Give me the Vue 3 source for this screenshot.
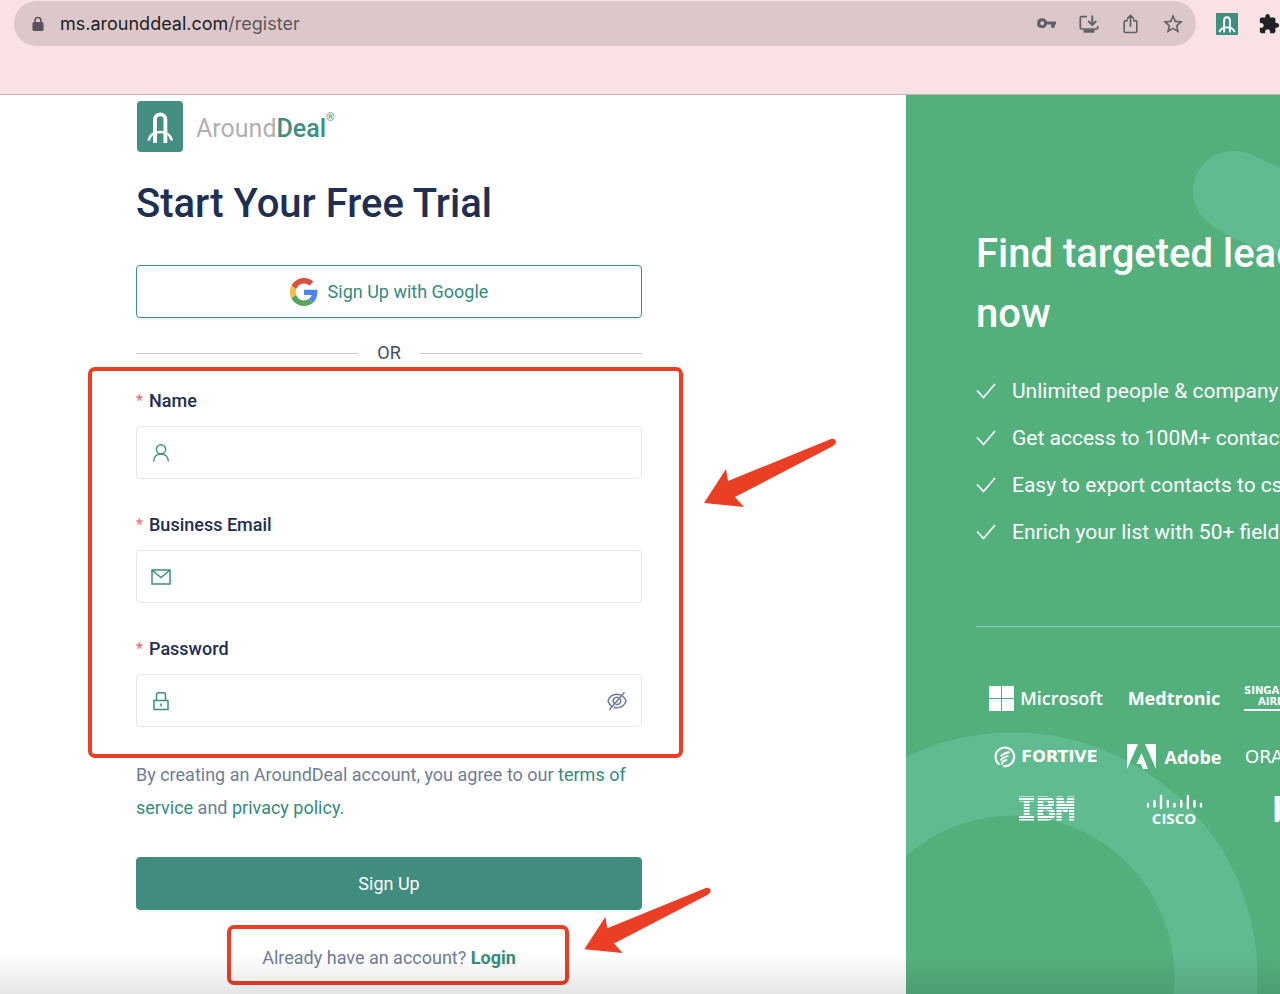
<script setup>
import { ref } from 'vue'

const name = ref('')
const email = ref('')
const password = ref('')
const showPassword = ref(false)

const benefits = [
  'Unlimited people & company',
  'Get access to 100M+ contacts',
  'Easy to export contacts to csv',
  'Enrich your list with 50+ fields',
]

const arrowPath = 'M0 65 22 31 24 43 127 1Q131 0 132 4 132 6 129 8L31 59 40 69Z'
</script>

<template>
  <div class="page">
    <header class="toolbar">
      <div class="address">
        <svg class="padlock" viewBox="0 0 12 16" aria-hidden="true">
          <path d="M3 7V4.500a3 3 0 0 1 6 0V7" fill="none" stroke="#55555a" stroke-width="1.600" />
          <rect x="0.500" y="6" width="11" height="9" rx="1.500" fill="#55555a" />
        </svg>
        <div class="url">ms.arounddeal.com<span>/register</span></div>
        <div class="actions">
          <button type="button" aria-label="Saved passwords">
            <svg viewBox="0 0 22 22">
              <path fill="currentColor" fill-rule="evenodd" d="M6.200 5.200a5 5 0 0 1 4.700 3.400H20v3h-1.200v3.200h-3.600v-3.200h-4.300A5 5 0 1 1 6.200 5.200zm0 3a2 2 0 1 0 0 4 2 2 0 0 0 0-4z" />
            </svg>
          </button>
          <button type="button" aria-label="Install app">
            <svg viewBox="0 0 22 22" fill="none" stroke="currentColor" stroke-width="1.700">
              <path d="M9 3.600H3.500a1.200 1.200 0 0 0-1.200 1.200v10a1.200 1.200 0 0 0 1.200 1.200h15a1.200 1.200 0 0 0 1.200-1.200V13" />
              <path d="M14.300 2.500v9M10.300 8l4 4 4-4" stroke-width="1.900" />
              <path d="M5.500 16.500h11v3.200h-11z" fill="currentColor" stroke="none" />
            </svg>
          </button>
          <button type="button" aria-label="Share">
            <svg viewBox="0 0 22 22" fill="none" stroke="currentColor" stroke-width="1.600">
              <path d="M8 7.600H5.500a1.300 1.300 0 0 0-1.300 1.300v9.300a1.300 1.300 0 0 0 1.300 1.300h10a1.300 1.300 0 0 0 1.300-1.300V8.900a1.300 1.300 0 0 0-1.300-1.300H13M10.500 14V3M7 6l3.500-3.500L14 6" />
            </svg>
          </button>
          <button type="button" aria-label="Bookmark this page">
            <svg viewBox="1 1 22 22">
              <path fill="currentColor" d="m22 9.240-7.190-.62L12 2 9.190 8.630 2 9.240l5.460 4.730L5.820 21 12 17.270 18.180 21l-1.630-7.030L22 9.240zM12 15.400l-3.760 2.270 1-4.280-3.320-2.880 4.380-.38L12 6.100l1.710 4.040 4.380.38-3.320 2.880 1 4.280L12 15.400z" />
            </svg>
          </button>
        </div>
      </div>
      <button type="button" class="ext" aria-label="AroundDeal extension">
        <svg viewBox="0 0 46 46" fill="none" stroke="#fff" stroke-width="4">
          <path fill="#3f8f80" stroke="none" d="M0 0h46v46H0z" />
          <path d="M17 41V15a6 6 0 0 1 12 0v26M7 40c2-6 8-10 16-10s14 4 16 10" />
        </svg>
      </button>
      <button type="button" class="ext" aria-label="Extensions">
        <svg viewBox="0 0 24 24">
          <path fill="#202124" d="M20.500 11H19V7c0-1.100-.9-2-2-2h-4V3.500C13 2.120 11.880 1 10.500 1S8 2.120 8 3.500V5H4c-1.100 0-1.990.9-1.990 2v3.800H3.500c1.490 0 2.700 1.210 2.700 2.700s-1.210 2.700-2.700 2.700H2V20c0 1.100.9 2 2 2h3.800v-1.500c0-1.490 1.210-2.700 2.700-2.700s2.700 1.210 2.700 2.700V22H17c1.100 0 2-.9 2-2v-4h1.500c1.380 0 2.500-1.120 2.500-2.500S21.880 11 20.500 11z" />
        </svg>
      </button>
    </header>

    <div class="content">
      <main class="signup">
        <div class="column">
          <div class="brand">
            <svg class="mark" viewBox="0 0 46 51" fill="none" stroke="#fff" stroke-width="3.800" aria-hidden="true">
              <rect width="46" height="51" rx="4" fill="#448f82" stroke="none" />
              <path d="M18 42V18.500a5.200 5.200 0 0 1 10.400 0V42" />
              <path d="M11.500 39.500c1-5 5.500-8.500 11.700-8.500s10.700 3.500 11.700 8.500" stroke-width="2.600" />
            </svg>
            <div class="wordmark">Around<b>Deal</b><sup>®</sup></div>
          </div>

          <h1>Start Your Free Trial</h1>

          <button type="button" class="google">
            <svg viewBox="0 0 48 48" aria-hidden="true">
              <path fill="#d9503f" d="M24 9.500c3.540 0 6.710 1.220 9.210 3.600l6.850-6.850C35.900 2.380 30.470 0 24 0 14.620 0 6.510 5.380 2.560 13.220l7.980 6.190C12.430 13.720 17.740 9.500 24 9.500z" />
              <path fill="#5086ec" d="M46.980 24.550c0-1.570-.15-3.090-.38-4.550H24v9.020h12.940c-.58 2.960-2.260 5.480-4.780 7.180l7.730 6c4.510-4.180 7.090-10.360 7.090-17.650z" />
              <path fill="#f2bd42" d="M10.530 28.590c-.48-1.450-.76-2.990-.76-4.590s.27-3.140.76-4.590l-7.980-6.190C.92 16.460 0 20.120 0 24c0 3.880.92 7.540 2.560 10.780l7.970-6.190z" />
              <path fill="#58a55c" d="M24 48c6.480 0 11.930-2.130 15.890-5.810l-7.730-6c-2.150 1.450-4.920 2.300-8.160 2.300-6.260 0-11.570-4.220-13.470-9.910l-7.980 6.190C6.510 42.620 14.620 48 24 48z" />
            </svg>
            Sign Up with Google
          </button>

          <div class="or"><span>OR</span></div>

          <form @submit.prevent>
            <div class="fields">
              <div class="field">
                <label for="name"><i>*</i>Name</label>
                <div class="control">
                  <svg viewBox="0 0 20 20" aria-hidden="true">
                    <circle cx="10" cy="6.300" r="4.600" />
                    <path d="M2.700 18.500c0-4.600 3-7.600 7.300-7.600s7.300 3 7.300 7.600" />
                  </svg>
                  <input id="name" v-model="name" type="text" autocomplete="name">
                </div>
              </div>
              <div class="field">
                <label for="email"><i>*</i>Business Email</label>
                <div class="control">
                  <svg viewBox="0 0 20 20" aria-hidden="true">
                    <path d="M1 3h18v14H1zM1.500 3.500 10 10.500l8.500-7" />
                  </svg>
                  <input id="email" v-model="email" type="email" autocomplete="email">
                </div>
              </div>
              <div class="field">
                <label for="password"><i>*</i>Password</label>
                <div class="control">
                  <svg viewBox="0 0 20 20" aria-hidden="true">
                    <path d="M3 9.500h14v9H3zM5.500 9.500V3.700a2 2 0 0 1 2-2h5a2 2 0 0 1 2 2v5.800M10 12.500v3" />
                  </svg>
                  <input id="password" v-model="password" :type="showPassword ? 'text' : 'password'" autocomplete="new-password">
                  <button type="button" class="eye" aria-label="Show password" @click="showPassword = !showPassword">
                    <svg viewBox="0 0 20 20" aria-hidden="true">
                      <path d="M14 4.200C12.800 3.600 11.500 3.200 10 3.200c-4.500 0-7.700 3-9 6.800.8 2.300 2.200 4.200 4 5.400M6.800 16.300c1 .4 2 .5 3.200.5 4.500 0 7.700-3 9-6.800-.7-2-1.900-3.700-3.400-4.900M11.700 6.800a3.600 3.600 0 0 0-4.600 5.400M8.700 13.300a3.600 3.600 0 0 0 4.500-5.100M2.500 18.800 17.500 1.200" />
                    </svg>
                  </button>
                </div>
              </div>
              <div class="frame"></div>
              <svg class="arrow" viewBox="0 0 132 70" aria-hidden="true"><path :d="arrowPath" /></svg>
            </div>

            <p class="terms">
              By creating an AroundDeal account, you agree to our
              <a href="#terms">terms of service</a> and <a href="#privacy">privacy policy.</a>
            </p>

            <button type="submit" class="submit">Sign Up</button>
          </form>

          <p class="login">
            <span>
              Already have an account? <a href="#login">Login</a>
              <i class="frame"></i>
              <svg class="arrow" viewBox="0 0 132 70" aria-hidden="true"><path :d="arrowPath" /></svg>
            </span>
          </p>
        </div>
      </main>

      <aside class="promo">
        <svg class="shapes" width="374" height="1130" aria-hidden="true">
          <circle cx="107" cy="882" r="203" fill="none" stroke="#61bb90" stroke-width="83" />
          <path fill="#61bb90" d="M328 56c9 0 17 2 25 7 9 5 18 9 27 12v88c-12-3-29-9-41-15-10-4-20-9-28-14-15-9-24-22-24-38 0-22 18-40 41-40z" />
        </svg>
        <div class="pitch">
          <h2>Find targeted leads<br>now</h2>
          <ul>
            <li v-for="item in benefits" :key="item">
              <svg viewBox="0 0 20 16" aria-hidden="true"><path d="M1 7.500 7.500 14.500 19 1" /></svg>
              {{ item }}
            </li>
          </ul>
          <hr>
          <div class="logos">
            <div class="logo microsoft">
              <svg viewBox="0 0 25 25" aria-hidden="true"><path fill="#fff" d="M0 0h12v12H0zM13 0h12v12H13zM0 13h12v12H0zM13 13h12v12H13z" /></svg>
              Microsoft
            </div>
            <div class="logo medtronic">Medtronic</div>
            <div class="logo singapore"><span>SINGAPORE</span><span>AIRLINES</span></div>
            <div class="logo fortive">
              <svg viewBox="0 0 22 22" fill="none" stroke="#fff" aria-hidden="true">
                <path d="M5.500 18.500A9.300 9.300 0 1 1 9 20" stroke-width="2.200" />
                <path d="M7 10.500c1.500-3 4-3 8.500-4.500M6.500 14.500c2-4 5-3 8-5M8 18.500c-.5-4 3-3.500 5-5" stroke-width="2" />
              </svg>
              FORTIVE
            </div>
            <div class="logo adobe">
              <svg viewBox="0 0 29 26" aria-hidden="true"><path fill="#fff" d="M0 0h11L0 25zM18 0h11v25zM14.500 9 21 25h-5l-2-5H9.500z" /></svg>
              Adobe
            </div>
            <div class="logo oracle">ORACLE</div>
            <div class="logo ibm">IBM</div>
            <div class="logo cisco">
              <svg viewBox="0 0 56 16" fill="none" stroke="#fff" stroke-width="2.400" stroke-linecap="round" aria-hidden="true">
                <path d="M1.500 10v2.500M8 7v5.500M14.500 2v12M21.300 7v5.500M28 10v2.500M34.700 7v5.500M41.400 2v12M48 7v5.500M54.500 10v2.500" />
              </svg>
              CISCO
            </div>
            <div class="logo last">b</div>
          </div>
        </div>
      </aside>
      <div class="shade"></div>
    </div>
  </div>
</template>

<style>
body {
  margin: 0;
  overflow-x: hidden;
}
</style>

<style scoped>
.page {
  display: flex;
  flex-direction: column;
  min-height: 100vh;
  font-family: Roboto, "Liberation Sans", sans-serif;
  font-size: 18px;
  line-height: 24px;
  color: #1e2f52;
}

button {
  font: inherit;
  cursor: pointer;
}

a {
  color: #358b7b;
  text-decoration: none;
}

.toolbar {
  display: flex;
  align-items: center;
  gap: 20px;
  padding: 1px 0 48px 14px;
  background: #fae1e4;
  border-bottom: 1px solid #c9b1b7;
}

.address {
  flex: 1;
  display: flex;
  align-items: center;
  height: 45px;
  padding: 0 12px 0 18px;
  border-radius: 23px;
  background: #dcc8ca;
}

.padlock {
  width: 12px;
  height: 16px;
}

.url {
  flex: 1;
  margin-left: 16px;
  font-family: Inter, "Liberation Sans", sans-serif;
  color: #202024;
}

.url span {
  color: #5d5659;
}

.actions {
  display: flex;
  gap: 20px;
}

.actions button,
.ext,
.eye {
  display: flex;
  padding: 0;
  border: 0;
  background: none;
  color: #5f6064;
}

.toolbar button svg {
  width: 22px;
  height: 22px;
}

.content {
  position: relative;
  flex: 1;
  display: grid;
  grid-template-columns: minmax(0, 906fr) minmax(0, 374fr);
}

.signup {
  padding: 6px 48px 24px 136px;
}

.column {
  max-width: 506px;
}

.brand {
  display: flex;
  align-items: center;
  gap: 12px;
}

.mark {
  width: 48px;
  height: 51px;
}

.wordmark {
  display: flex;
  align-items: center;
  padding-top: 4px;
  font-size: 25px;
  line-height: 26px;
  color: #b0b0b0;
}

.wordmark b {
  font-weight: 500;
  color: #3f8f80;
}

.wordmark sup {
  align-self: flex-start;
  font-size: 11px;
  line-height: 4px;
  color: #3f8f80;
}

h1 {
  margin: 28px 0 37px;
  font-size: 40px;
  line-height: 48px;
  font-weight: 500;
}

.google,
.submit {
  display: flex;
  align-items: center;
  justify-content: center;
  gap: 10px;
  width: 100%;
  height: 53px;
  border: 1px solid #3f8f80;
  border-radius: 4px;
  background: #fff;
  color: #358b7b;
  box-shadow: 0 2px 2px rgba(0, 0, 0, 0.05);
}

.google svg {
  width: 28px;
  height: 28px;
}

.submit {
  background: #408d80;
  color: #fff;
}

.or {
  display: flex;
  align-items: center;
  gap: 19px;
  margin: 23px 0 24px;
  color: #424e5c;
}

.or::before,
.or::after {
  content: "";
  flex: 1;
  height: 1px;
  background: #c9cccf;
}

.fields {
  position: relative;
  display: grid;
  gap: 34px;
}

.field {
  display: grid;
  gap: 13px;
}

label {
  display: flex;
  font-weight: 500;
}

label i {
  width: 13px;
  font-style: normal;
  font-weight: 400;
  font-size: 16px;
  color: #f06a68;
}

.control {
  display: flex;
  align-items: center;
  box-sizing: border-box;
  height: 53px;
  padding: 0 14px;
  border: 1px solid #e4e7ec;
  border-radius: 4px;
}

.control svg {
  flex: none;
  width: 20px;
  height: 20px;
  fill: none;
  stroke: #3f8f80;
  stroke-width: 1.5;
}

.control .eye svg {
  stroke: #6f7d96;
}

.control input {
  flex: 1;
  min-width: 0;
  padding: 0 12px;
  border: 0;
  outline: 0;
  background: none;
  font: inherit;
  color: inherit;
}

.frame {
  position: absolute;
  inset: -22px -41px -31px -48px;
  border: 4px solid #ea3f25;
  border-radius: 7px;
  pointer-events: none;
}

.arrow {
  position: absolute;
  left: 568px;
  top: 49px;
  width: 132px;
  height: 70px;
  fill: #ea3f25;
  pointer-events: none;
}

.terms {
  margin: 31px 0 33px;
  line-height: 33px;
  color: #6f7d96;
}

.login {
  margin: 36px 0 0;
  text-align: center;
  color: #6f7d96;
}

.login > span {
  position: relative;
  display: inline-block;
}

.login a {
  font-weight: 700;
}

.login .frame {
  inset: -21px -53px -15px -35px;
}

.login .arrow {
  left: 322px;
  top: -59px;
  width: 127px;
  height: 67px;
}

.promo {
  position: relative;
  overflow: hidden;
  background: #53b07d;
  color: #fff;
}

.shapes {
  position: absolute;
  top: 0;
  left: 0;
}

.pitch {
  position: relative;
  padding: 129px 0 0 70px;
  white-space: nowrap;
}

h2 {
  margin: 0 0 32px;
  font-size: 40px;
  line-height: 60px;
  font-weight: 500;
}

ul {
  display: grid;
  gap: 17px;
  margin: 0;
  padding: 0;
  list-style: none;
  font-size: 21px;
  line-height: 30px;
}

li {
  display: flex;
  align-items: center;
  gap: 16px;
}

li svg {
  width: 20px;
  height: 16px;
  fill: none;
  stroke: #fff;
  stroke-width: 1.6;
}

hr {
  height: 1px;
  margin: 79px 0 41px;
  border: 0;
  background: #8bcdc0;
}

.logos {
  display: grid;
  grid-template-columns: repeat(3, 128px);
  grid-template-rows: 60px 58px 46px;
  padding-left: 6px;
}

.logo {
  display: flex;
  align-items: center;
  justify-content: center;
  font-family: "Open Sans", "Noto Sans", sans-serif;
  font-weight: 700;
}

.microsoft {
  gap: 6px;
  font-weight: 600;
}

.microsoft svg {
  width: 25px;
  height: 25px;
}

.singapore {
  flex-direction: column;
  align-items: flex-end;
  align-self: center;
  justify-self: start;
  gap: 1px;
  margin-left: 6px;
  padding-bottom: 2px;
  border-bottom: 2px solid #fff;
  font-family: "DejaVu Sans", sans-serif;
  font-size: 10px;
  line-height: 10px;
}

.fortive {
  gap: 5px;
  font-family: "DejaVu Sans", sans-serif;
  font-size: 16px;
}

.fortive svg {
  width: 22px;
  height: 22px;
}

.adobe {
  gap: 9px;
}

.adobe svg {
  width: 29px;
  height: 26px;
}

.oracle,
.last {
  justify-content: flex-start;
  padding-left: 7px;
}

.oracle {
  font-family: "DejaVu Sans", sans-serif;
  font-weight: 400;
}

.last {
  padding-left: 34px;
  font-size: 34px;
}

.ibm {
  font-family: "DejaVu Sans Mono", monospace;
  font-size: 32px;
  -webkit-text-stroke: 1px #fff;
  mask-image: repeating-linear-gradient(#000 0 2px, transparent 2px 3px);
}

.cisco {
  flex-direction: column;
  gap: 1px;
  font-size: 15px;
  line-height: 14px;
}

.cisco svg {
  width: 57px;
  height: 16px;
}

.shade {
  position: absolute;
  inset: auto 0 0;
  height: 40px;
  background: linear-gradient(transparent, rgba(0, 0, 0, 0.1));
  pointer-events: none;
}
</style>
